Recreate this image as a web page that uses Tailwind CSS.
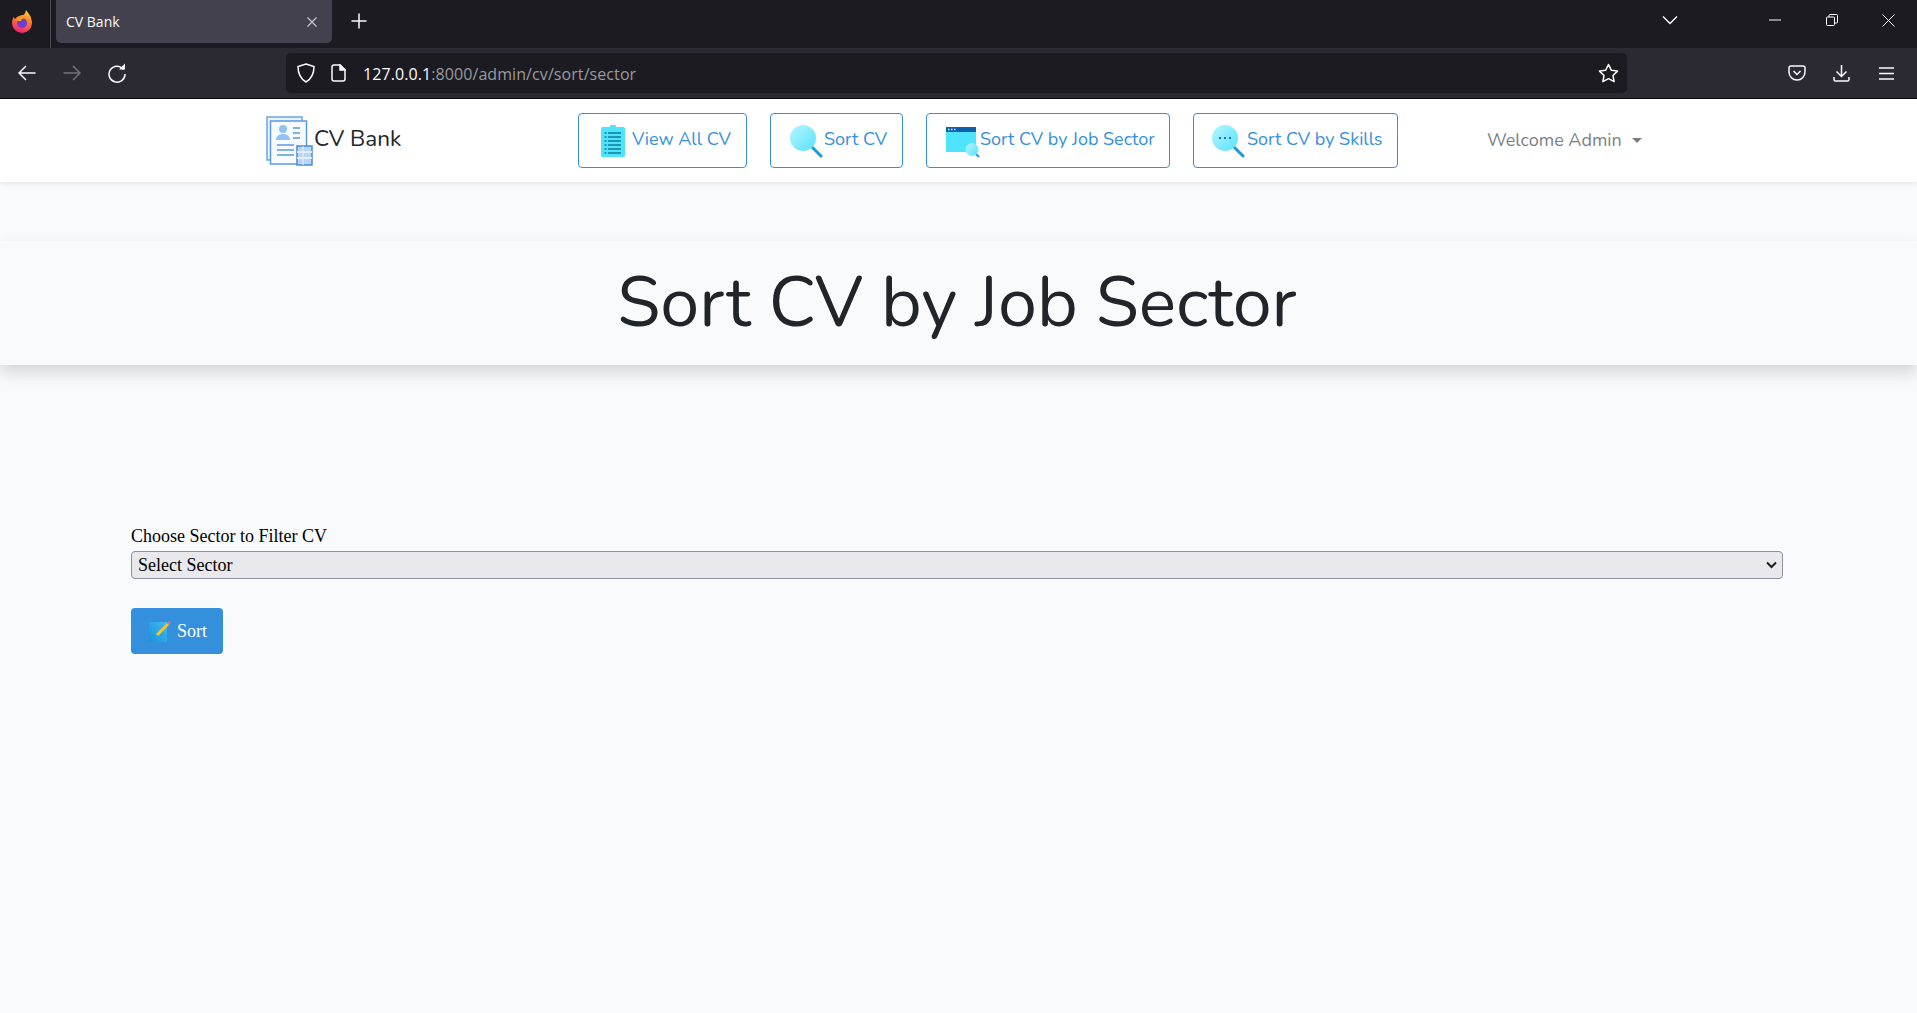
<!DOCTYPE html>
<html lang="en">
<head>
    <meta charset="UTF-8">
    <title>CV Bank</title>
    <script src="https://cdn.jsdelivr.net/npm/@tailwindcss/browser@4"></script>
</head>
<body class="bg-[#f8fafc] h-[1013px] overflow-hidden font-['Lato',sans-serif]">
    <svg width="0" height="0" class="absolute">
        <defs>
            <linearGradient id="fx" x1="0.7" y1="0" x2="0.4" y2="1"><stop offset="0" stop-color="#ffd52e"/><stop offset="0.45" stop-color="#ff7a2a"/><stop offset="1" stop-color="#f0207a"/></linearGradient>
            <linearGradient id="lens" x1="0" y1="0" x2="1" y2="1"><stop offset="0" stop-color="#b4f6ff"/><stop offset="1" stop-color="#59e3fb"/></linearGradient>
            <linearGradient id="pad" x1="0" y1="1" x2="1" y2="0"><stop offset="0" stop-color="#1493dc"/><stop offset="1" stop-color="#45b8ec"/></linearGradient>
        </defs>
    </svg>

    <!-- browser tab strip -->
    <div class="h-[48px] bg-[#1c1b22] flex items-start text-[#fbfbfe]">
        <div class="w-[51px] h-[48px] border-r border-[#4a4a52] flex items-center justify-center">
            <svg width="20" height="23" viewBox="0 0 20 23" class="-mt-[5px] -ml-[6px]">
                <path d="M14 0c1 2 5 5 5.500 10 .5 1 .5 2 .5 3a10 10 0 0 1-20 0c0-3 1-5 2-6.500 0 1 .5 2 1 2.500C5 6 9 5 11 5c1 0 2.500-2 3-5z" fill="url(#fx)"/>
                <circle cx="10" cy="13" r="5" fill="#6a3fd0"/>
                <path d="M4 10c2-3 7-4 10-1-3-1-5 0-5 2-2 0-3.500 0-5-1z" fill="#ff9a2a"/>
            </svg>
        </div>
        <div class="ml-[5px] w-[276px] h-[43px] bg-[#42414d] rounded-b-[5px] flex items-center justify-between pl-[10px] pr-[14px]">
            <span class="text-[14px] font-['Open_Sans',sans-serif]">CV Bank</span>
            <svg width="12" height="12" viewBox="0 0 12 12" stroke="#c9c9cf" stroke-width="1.2" fill="none"><path d="M1.5 1.5l9 9M10.5 1.5l-9 9"/></svg>
        </div>
        <button class="ml-[19px] mt-[13px]">
            <svg width="16" height="16" viewBox="0 0 16 16" stroke="#fbfbfe" stroke-width="1.5" fill="none"><path d="M8 .5v15M.5 8h15"/></svg>
        </button>
        <div class="ml-auto flex items-center h-[40px]">
            <svg width="16" height="10" viewBox="0 0 16 10" stroke="#fbfbfe" stroke-width="1.4" fill="none"><path d="M1 1.5l7 7 7-7"/></svg>
            <svg class="ml-[91px]" width="12" height="2" viewBox="0 0 12 2" stroke="#fbfbfe" fill="none"><path d="M0 1h12"/></svg>
            <svg class="ml-[45px]" width="12" height="12" viewBox="0 0 12 12" stroke="#fbfbfe" fill="none"><rect x=".5" y="3" width="8" height="8.5" rx="1"/><path d="M3 3V1.5a1 1 0 0 1 1-1h6.5a1 1 0 0 1 1 1V8a1 1 0 0 1-1 1H8.5"/></svg>
            <svg class="ml-[44px] mr-[22px]" width="13" height="13" viewBox="0 0 13 13" stroke="#fbfbfe" fill="none"><path d="M.5.5l12 12M12.5.5l-12 12"/></svg>
        </div>
    </div>

    <!-- browser toolbar -->
    <div class="h-[51px] bg-[#2b2a33] border-b border-[#0c0c0f] flex items-center text-[#fbfbfe] relative">
        <svg class="ml-[18px]" width="18" height="16" viewBox="0 0 18 16" stroke="#fbfbfe" stroke-width="1.5" fill="none"><path d="M8 1L1 8l7 7M1 8h16.5"/></svg>
        <svg class="ml-[27px]" width="18" height="16" viewBox="0 0 18 16" stroke="#74737a" stroke-width="1.5" fill="none"><path d="M10 1l7 7-7 7M17 8H.5"/></svg>
        <svg class="ml-[26px]" width="20" height="20" viewBox="0 0 20 20" stroke="#fbfbfe" stroke-width="1.5" fill="none"><path d="M16.5 6.5A8 8 0 1 0 18 11"/><path d="M12 6.5h6v-6z" fill="#fbfbfe" stroke="none"/></svg>
        <div class="ml-[159px] w-[1341px] h-[40px] bg-[#1c1b22] rounded-[5px] flex items-center">
            <svg class="ml-[11px]" width="18" height="20" viewBox="0 0 18 20" stroke="#fbfbfe" stroke-width="1.5" fill="none"><path d="M9 1l8 2.5c0 7-2 12-8 15.5C3 15.5 1 10.5 1 3.5z"/></svg>
            <svg class="ml-[16px]" width="15" height="18" viewBox="0 0 15 18" stroke="#fbfbfe" stroke-width="1.5" fill="none"><path d="M3 1h6l5 5v9a2 2 0 0 1-2 2H3a2 2 0 0 1-2-2V3a2 2 0 0 1 2-2z"/><path d="M9 1v5h5z" fill="#fbfbfe"/></svg>
            <span class="ml-[17px] mt-[2px] text-[16px] font-['Open_Sans',sans-serif] tracking-[0.08px]">127.0.0.1<span class="text-[#9a9a9f]">:8000/admin/cv/sort/sector</span></span>
            <svg class="ml-auto mr-[8px]" width="21" height="20" viewBox="0 0 21 20" stroke="#fbfbfe" stroke-width="1.5" fill="none" stroke-linejoin="round"><path d="M10.5 1.5l2.8 5.7 6.2.9-4.500 4.400 1.100 6.200-5.600-3-5.600 3 1.100-6.200L1.500 8.100l6.200-.9z"/></svg>
        </div>
        <svg class="ml-[161px]" width="18" height="16" viewBox="0 0 18 16" stroke="#fbfbfe" stroke-width="1.5" fill="none"><path d="M3 1h12a2 2 0 0 1 2 2v4a8 8 0 0 1-16 0V3a2 2 0 0 1 2-2z"/><path d="M5.5 6L9 9.5 12.5 6"/></svg>
        <svg class="ml-[27px]" width="17" height="18" viewBox="0 0 17 18" stroke="#fbfbfe" stroke-width="1.5" fill="none"><path d="M8.5 1v11M3.5 7.5l5 5 5-5M1 13v2.5a1.500 1.500 0 0 0 1.500 1.500h12a1.500 1.500 0 0 0 1.500-1.500V13"/></svg>
        <svg class="ml-[29px]" width="15" height="13" viewBox="0 0 15 13" stroke="#fbfbfe" stroke-width="1.5" fill="none"><path d="M0 1h15M0 6.5h15M0 12h15"/></svg>
    </div>

    <!-- navbar -->
    <nav class="h-[83px] bg-white shadow-[0_2px_4px_rgba(0,0,0,0.08)] flex items-center relative font-['Nunito','Lato',sans-serif]">
        <div class="ml-[266px] w-[50px] flex items-center">
            <svg width="48" height="50" viewBox="0 0 48 50" class="shrink-0">
                <rect x="1" y="1" width="35" height="43" fill="#eaf3fc" stroke="#6ea6e2" stroke-width="1.5"/>
                <rect x="4.5" y="5" width="36" height="43" fill="#f7fbff" stroke="#5b9ae0" stroke-width="1.5"/>
                <circle cx="17" cy="13" r="4" fill="#90c4f6"/>
                <path d="M10 24c0-8 14-8 14 0z" fill="#90c4f6"/>
                <path d="M27 12h7M27 17h7M27 22h7M11 29h17M11 34h17M11 39h17" stroke="#5b9ae0" stroke-width="1.3"/>
                <rect x="31" y="30" width="15" height="19" fill="#b5d6f8" stroke="#4d8bd4" stroke-width="1.5"/>
                <path d="M31 36h15M31 42h15" stroke="#f2f8ff" stroke-width="1.5"/><path d="M37 30v19" stroke="#eaf3fc" stroke-width="1"/>
            </svg>
        </div>
        <a class="text-[22.5px] text-[#212529] ml-[-2px] -mt-[3px]">CV Bank</a>

        <a class="absolute left-[578px] top-[14px] w-[169px] h-[55px] border border-[#3490dc] rounded-[4px] text-[#3490dc] text-[18px] flex items-center pl-[21px]">
            <svg width="26" height="32" viewBox="0 0 26 32" class="mr-[6px] shrink-0">
                <rect x="1" y="2" width="24" height="30" rx="1.5" fill="#4fe3fd"/>
                <rect x="10" y="0" width="6" height="4" rx="1" fill="#4fe3fd"/>
                <path d="M8 8h13M8 12h13M8 16h13M8 20h13M8 24h13M8 28h13" stroke="#0b7f9c" stroke-width="1.4"/>
                <path d="M4.5 8h2M4.5 12h2M4.5 16h2M4.5 20h2M4.5 24h2M4.5 28h2" stroke="#0b7f9c" stroke-width="1.4"/>
            </svg>
            <span class="-mt-[2px]">View All CV</span>
        </a>
        <a class="absolute left-[770px] top-[14px] w-[133px] h-[55px] border border-[#3490dc] rounded-[4px] text-[#3490dc] text-[18px] flex items-center pl-[18px]">
            <svg width="34" height="34" viewBox="0 0 34 34" class="mr-[1px] shrink-0">
                <path d="M23 23l9 9" stroke="#1c9ad6" stroke-width="3" stroke-linecap="round"/>
                <circle cx="14" cy="14" r="13" fill="url(#lens)"/>
            </svg>
            <span class="-mt-[2px]">Sort CV</span>
        </a>
        <a class="absolute left-[926px] top-[14px] w-[244px] h-[55px] border border-[#3490dc] rounded-[4px] text-[#3490dc] text-[18px] flex items-center pl-[18px]">
            <svg width="35" height="33" viewBox="0 0 35 33" class="mt-[3px] shrink-0">
                <rect x="1" y="1" width="30" height="25" fill="#4fe3fd"/>
                <rect x="1" y="1" width="30" height="5" fill="#0d5fb0"/>
                <path d="M3 3.5h1.500M6 3.500h1.500M9 3.500h1.500" stroke="#d7f4ff" stroke-width="1.4"/>
                <path d="M31 28l3 3" stroke="#1c9ad6" stroke-width="2"/>
                <circle cx="27" cy="23.500" r="6.500" fill="url(#lens)"/>
            </svg>
            <span class="-mt-[2px]">Sort CV by Job Sector</span>
        </a>
        <a class="absolute left-[1193px] top-[14px] w-[205px] h-[55px] border border-[#3490dc] rounded-[4px] text-[#3490dc] text-[18px] flex items-center pl-[17px]">
            <svg width="34" height="34" viewBox="0 0 34 34" class="mr-[2px] shrink-0">
                <path d="M23 23l9 9" stroke="#1c9ad6" stroke-width="3" stroke-linecap="round"/>
                <circle cx="14" cy="14" r="13" fill="url(#lens)"/>
                <path d="M8 14h2M13 14h2M18 14h2" stroke="#1f6fc0" stroke-width="2"/>
            </svg>
            <span class="-mt-[2px]">Sort CV by Skills</span>
        </a>
        <a class="absolute left-[1487px] top-[28px] text-[18px] text-[#7a7f84] flex items-center">
            Welcome Admin
            <span class="ml-[10px] w-0 h-0 border-x-[5px] border-x-transparent border-t-[5px] border-t-[#7a7f84]"></span>
        </a>
    </nav>

    <main class="pt-[59px]">
        <div class="h-[124px] bg-[#f8fafc] shadow-[0_8px_16px_rgba(0,0,0,0.15)] flex items-center justify-center font-['Nunito','Lato',sans-serif]">
            <h1 class="text-[70px] text-[#212529] leading-none font-normal -ml-[3px]">Sort CV by Job Sector</h1>
        </div>

        <form class="ml-[131px] w-[1652px] mt-[162px] font-['Liberation_Serif',serif]">
            <label class="block text-[18px] leading-[18px] text-black">Choose Sector to Filter CV</label>
            <div class="relative mt-[6px]">
                <select class="w-full h-[28px] appearance-none bg-[#e9e8ed] border border-[#8f8f9d] rounded-[4px] pl-[6px] text-[18px] text-black">
                    <option>Select Sector</option>
                </select>
                <svg class="absolute right-[6px] top-[10px]" width="11" height="8" viewBox="0 0 11 8" stroke="#1c1b22" stroke-width="2" fill="none"><path d="M1 1.5l4.5 4.5L10 1.5"/></svg>
            </div>
            <button type="button" class="mt-[29px] w-[92px] h-[46px] bg-[#3490dc] rounded-[4px] text-white text-[18px] flex items-center pl-[18px]">
                <svg width="22" height="22" viewBox="0 0 22 22" class="mr-[6px]">
                    <rect x="0" y="2" width="18" height="20" fill="url(#pad)"/>
                    <path d="M8 15L19 4" stroke="#f7c325" stroke-width="3"/>
                    <path d="M19 4l2-2" stroke="#e06f8c" stroke-width="3"/>
                </svg>
                Sort
            </button>
        </form>
    </main>
</body>
</html>
